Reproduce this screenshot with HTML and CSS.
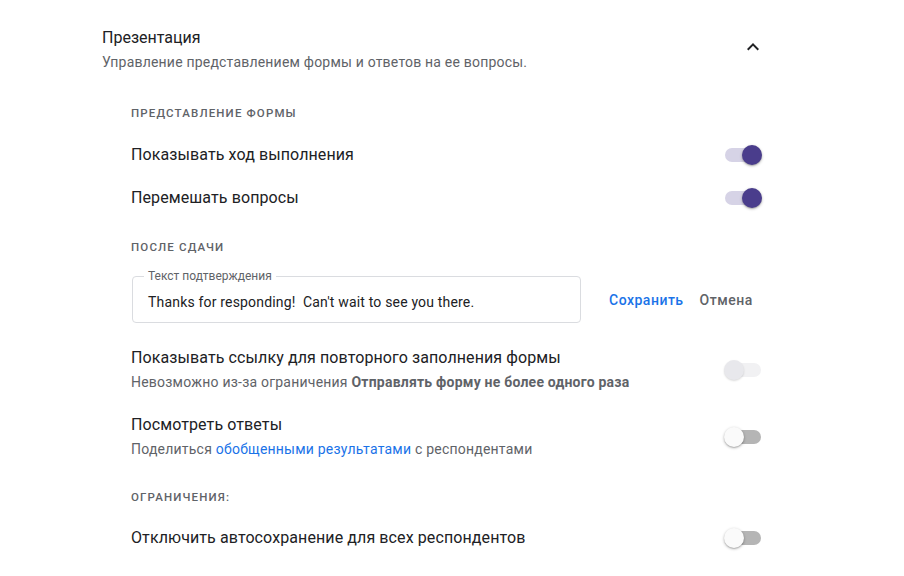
FILE: index.html
```html
<!DOCTYPE html>
<html lang="ru">
<head>
  <meta charset="UTF-8" />
  <meta name="viewport" content="width=device-width, initial-scale=1.0">
  <title>Презентация</title>
  <link rel="stylesheet" href="styles.css">
</head>
<body>
  <div class="panel">
    <header class="panel-head">
      <div>
        <h1>Презентация</h1>
        <p class="panel-desc">Управление представлением формы и ответов на ее вопросы.</p>
      </div>
      <svg class="chevron" width="24" height="24" viewBox="0 0 24 24"><path d="M12 8l-6 6 1.41 1.41L12 10.83l4.59 4.58L18 14z" fill="#202124"/></svg>
    </header>

    <div class="content">
      <div class="section-title first">Представление формы</div>
      <div class="row">
        <span class="row-label">Показывать ход выполнения</span>
        <div class="switch on"><div class="track"></div><div class="knob"></div></div>
      </div>
      <div class="row">
        <span class="row-label">Перемешать вопросы</span>
        <div class="switch on"><div class="track"></div><div class="knob"></div></div>
      </div>

      <div class="section-title after-rows">После сдачи</div>
      <div class="edit-line">
        <div class="field">
          <span class="field-label">Текст подтверждения</span>
          <div class="field-value">Thanks for responding!&nbsp; Can't wait to see you there.</div>
        </div>
        <button class="text-btn save">Сохранить</button>
        <button class="text-btn cancel">Отмена</button>
      </div>

      <div class="row tall first-tall">
        <div>
          <div class="row-label">Показывать ссылку для повторного заполнения формы</div>
          <div class="row-note">Невозможно из-за ограничения <strong>Отправлять форму не более одного раза</strong></div>
        </div>
        <div class="switch disabled"><div class="track"></div><div class="knob"></div></div>
      </div>
      <div class="row tall">
        <div>
          <div class="row-label">Посмотреть ответы</div>
          <div class="row-note">Поделиться <a href="#">обобщенными результатами</a> с респондентами</div>
        </div>
        <div class="switch"><div class="track"></div><div class="knob"></div></div>
      </div>

      <div class="section-title limits">Ограничения:</div>
      <div class="row">
        <span class="row-label">Отключить автосохранение для всех респондентов</span>
        <div class="switch"><div class="track"></div><div class="knob"></div></div>
      </div>
    </div>
  </div>
</body>
</html>
```

FILE: styles.css
```css
body { margin: 0; padding-top: 26px; font-family: Roboto, "Noto Sans", sans-serif; color: #202124; background: #fff; }
.panel { margin-left: 102px; width: 661px; }
.panel-head { display: flex; justify-content: space-between; align-items: flex-start; }
h1 { margin: 0; font-size: 16px; line-height: 24px; font-weight: 400; }
.panel-desc { margin: 2px 0 0; font-size: 14px; line-height: 20px; letter-spacing: 0.2px; color: #5f6368; }
.chevron { margin-top: 9px; margin-right: -2px; }
.content { padding-left: 29px; }
.section-title { height: 16px; font-size: 11.5px; line-height: 16px; font-weight: 500; letter-spacing: 1.15px; text-transform: uppercase; color: #5f6368; }
.section-title.first { margin-top: 33px; margin-bottom: 12px; }
.section-title.after-rows { margin-top: 20px; }
.section-title.limits { margin-top: 30px; margin-bottom: 11px; }
.row { display: flex; justify-content: space-between; align-items: center; height: 43px; }
.row.tall { height: auto; margin-top: 21px; }
.row.first-tall { margin-top: 23px; }
.row-label { font-size: 16px; line-height: 24px; letter-spacing: 0.1px; }
.row-note { margin-top: 2px; font-size: 14px; line-height: 20px; letter-spacing: 0.22px; color: #5f6368; }
.row-note strong { font-weight: 700; }
.row-note a { color: #1a73e8; text-decoration: none; }
.row.tall .switch { margin-top: 2px; }

.switch { position: relative; width: 38px; height: 20px; margin-right: 1px; flex-shrink: 0; }
.switch .track { position: absolute; left: 1px; top: 3px; width: 36px; height: 14px; border-radius: 7px; background: #b5b5b5; }
.switch .knob { position: absolute; left: 0; top: 0; width: 20px; height: 20px; border-radius: 50%; background: #fafafa; box-shadow: 0 1px 3px rgba(0,0,0,0.3), 0 1px 1px rgba(0,0,0,0.12); }
.switch.on .track { background: #d6d3e6; }
.switch.on .knob { left: 18px; background: #4a3d8c; }
.switch.disabled .track { background: #f1f1f3; }
.switch.disabled .knob { background: #e8e8ec; box-shadow: 0 1px 2px rgba(0,0,0,0.15); }

.edit-line { display: flex; align-items: center; margin-top: 21px; }
.field { position: relative; width: 447px; height: 45px; margin-left: 1px; border: 1px solid #dadce0; border-radius: 4px; }
.field-label { position: absolute; left: 11px; top: -8px; padding: 0 4px; background: #fff; font-size: 12px; line-height: 15px; color: #5f6368; }
.field-value { padding: 15px 0 0 15px; font-size: 14px; line-height: 20px; letter-spacing: 0.18px; color: #202124; }
.text-btn { border: none; background: none; padding: 0; font-family: inherit; font-size: 14px; font-weight: 500; letter-spacing: 0.5px; cursor: pointer; }
.save { margin-left: 28px; color: #1a73e8; }
.cancel { margin-left: 16px; color: #5f6368; }
```
